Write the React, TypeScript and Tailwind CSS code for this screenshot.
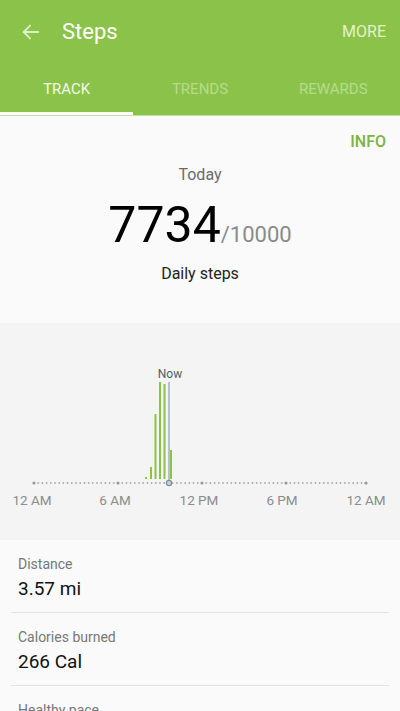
import React from "react";

const bars = [
	{ x: 146, top: 154 },
	{ x: 151, top: 144 },
	{ x: 155.5, top: 91 },
	{ x: 160, top: 59 },
	{ x: 164.5, top: 61 },
	{ x: 171, top: 127 },
];

const ticks = [34, 118, 202, 286, 366];
const labels = [
	{ x: 32, t: "12 AM" },
	{ x: 115, t: "6 AM" },
	{ x: 199, t: "12 PM" },
	{ x: 282, t: "6 PM" },
	{ x: 366, t: "12 AM" },
];

const StepsChart: React.FC = () => {
	const dots: number[] = [];
	for (let x = 34; x <= 366; x += 4.2) dots.push(x);
	return (
		<svg width="400" height="217" viewBox="0 0 400 217">
			{dots.map((x) => (
				<circle key={x} cx={x} cy={160} r={0.9} fill="#a9a9a9" />
			))}
			{ticks.map((x) => (
				<circle key={x} cx={x} cy={160} r={1.6} fill="#999" />
			))}
			{bars.map((b) => (
				<rect key={b.x} x={b.x - 1} y={b.top} width={2} height={156 - b.top} fill="#8bc34a" />
			))}
			<line x1={169} y1={59} x2={169} y2={160} stroke="#7d8e9e" strokeWidth={1} />
			<circle cx={169} cy={160} r={2.6} fill="#c9d3dc" stroke="#7d8e9e" strokeWidth={1.2} />
			<text x={170} y={55} textAnchor="middle" fontSize={12} fill="#4f5e6c" fontFamily="Roboto, sans-serif">
				Now
			</text>
			{labels.map((l, i) => (
				<text key={i} x={l.x} y={182} textAnchor="middle" fontSize={13.5} fill="#8c8c8c" fontFamily="Roboto, sans-serif">
					{l.t}
				</text>
			))}
		</svg>
	);
};

const App: React.FC = () => {
	return (
		<div className="w-[400px] h-[711px] overflow-hidden bg-[#fafafa] font-['Roboto',sans-serif]">
			{/* header */}
			<div className="bg-[#8bc34a]">
				<div className="h-16 flex items-center">
					<svg className="ml-[20px]" width="22" height="22" viewBox="0 0 24 24" fill="none" stroke="#def0c8" strokeWidth="2" strokeLinecap="round" strokeLinejoin="round">
						<path d="M20 12H4" />
						<path d="M11 19l-7-7 7-7" />
					</svg>
					<span className="ml-[20px] text-[22px] text-white leading-none">Steps</span>
					<span className="ml-auto mr-[14px] text-[16px] text-[#e2f1cf] leading-none">MORE</span>
				</div>
				<div className="h-[51px] grid grid-cols-3 text-[15px] leading-none">
					<div className="flex items-center justify-center border-b-[3px] border-white text-[#f3f9ec] pt-[3px]">
						TRACK
					</div>
					<div className="flex items-center justify-center text-[#b6db8e]">TRENDS</div>
					<div className="flex items-center justify-center text-[#b6db8e]">REWARDS</div>
				</div>
			</div>
			<div className="h-px bg-[#c2e1a0]" />

			{/* summary */}
			<div className="h-[207px] flex flex-col items-center">
				<div className="self-end mr-[14px] mt-[16px] text-[16px] leading-5 font-medium text-[#7cb342]">INFO</div>
				<div className="mt-[12px] text-[16px] leading-[22px] text-[#6b6b6b]">Today</div>
				<div className="mt-[14px] flex items-baseline leading-none">
					<span className="text-[50px] text-black">7734</span>
					<span className="text-[22px] text-[#8a8a8a]">/10000</span>
				</div>
				<div className="mt-[13px] text-[16px] leading-[22px] text-[#222]">Daily steps</div>
			</div>

			{/* chart */}
			<div className="h-[217px] bg-[#f4f4f4]">
				<StepsChart />
			</div>

			{/* stats */}
			<div className="mx-[11px]">
				{[
					{ label: "Distance", value: "3.57 mi" },
					{ label: "Calories burned", value: "266 Cal" },
					{ label: "Healthy pace", value: "0 min" },
				].map((row) => (
					<div key={row.label} className="px-[7px] pt-[14px] pb-[10px] border-b border-[#e2e2e2]">
						<p className="text-[14px] leading-5 text-[#777]">{row.label}</p>
						<p className="mt-[2px] text-[19px] leading-[26px] text-[#111]">{row.value}</p>
					</div>
				))}
			</div>
		</div>
	);
};

export default App;
